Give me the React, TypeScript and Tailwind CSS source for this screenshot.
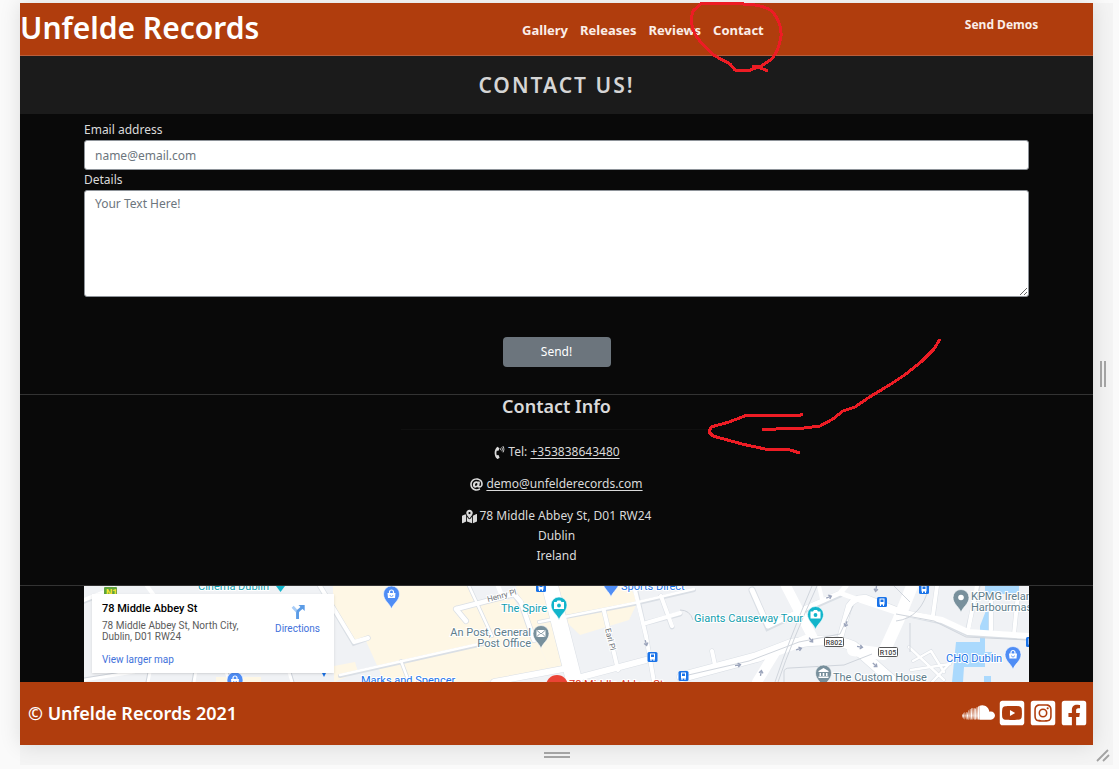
import React from "react";
import {
  FaAt,
  FaFacebookSquare,
  FaInstagramSquare,
  FaMapMarkedAlt,
  FaPhoneVolume,
  FaSoundcloud,
  FaYoutubeSquare,
} from "react-icons/fa";

const navLinks = ["Gallery", "Releases", "Reviews", "Contact"];

const socials = [
  { label: "SoundCloud", Icon: FaSoundcloud, size: "h-[33px] w-[33px]" },
  { label: "YouTube", Icon: FaYoutubeSquare, size: "h-7 w-7" },
  { label: "Instagram", Icon: FaInstagramSquare, size: "h-7 w-7" },
  { label: "Facebook", Icon: FaFacebookSquare, size: "h-7 w-7" },
];

type PinKind = "shop" | "camera" | "mail" | "museum" | "dot";

function Pin({ x, y, color, kind }: { x: number; y: number; color: string; kind: PinKind }) {
  return (
    <g transform={`translate(${x} ${y})`}>
      <path d="M0 15C-1.6 9.500-8 6.500-8 0a8 8 0 1 1 16 0C8 6.500 1.600 9.500 0 15z" fill={color} stroke="#fff" strokeWidth="0.6" />
      {kind === "shop" && (
        <>
          <path d="M-4-1h8l-.5 5h-7z" fill="#fff" />
          <path d="M-2 0v-2a2 2 0 0 1 4 0v2" fill="none" stroke="#fff" strokeWidth="1.200" />
          <path d="M-1.500 1a1.500 1.500 0 0 0 3 0" fill="none" stroke={color} strokeWidth="0.8" />
        </>
      )}
      {kind === "camera" && (
        <>
          <path d="M-5-3h2.500l1-1.500h3L2.500-3H5v7H-5z" fill="#fff" />
          <circle cx="0" cy="0.5" r="1.900" fill={color} />
        </>
      )}
      {kind === "mail" && (
        <>
          <path d="M-4.500-3.500h9v7h-9z" fill="#fff" />
          <path d="M-4.500-3.500L0 .5l4.500-4M-4.500 3.500l3-3M4.500 3.500l-3-3" fill="none" stroke={color} strokeWidth="0.9" />
        </>
      )}
      {kind === "museum" && (
        <path d="M-5-2L0-5l5 3v1H-5zM-4 0h1.500v3H-4zM-.8 0H.8v3H-.8zM2.500 0H4v3H2.500zM-5 3.500H5V5H-5z" fill="#fff" />
      )}
      {kind === "dot" && <circle r="2.800" fill="#fff" />}
    </g>
  );
}

function Stop({ x, y }: { x: number; y: number }) {
  return (
    <g transform={`translate(${x} ${y})`}>
      <rect x="-5" y="-5" width="10" height="10" rx="1.500" fill="#1a73e8" />
      <path d="M-2.500-3.500h5v6h-5zM-2 2.500h1V4h-1zM1 2.500h1V4H1z" fill="#fff" />
      <path d="M-1.500-2.500h3v2.500h-3z" fill="#1a73e8" />
    </g>
  );
}

function RoadArrow({ x, y, turn }: { x: number; y: number; turn: number }) {
  return (
    <path
      d="M-3 0H2M0-2L2.500 0L0 2"
      transform={`translate(${x} ${y}) rotate(${turn})`}
      fill="none"
      stroke="#9aa3ba"
      strokeWidth="1.300"
    />
  );
}

function StreetMap() {
  return (
    <svg
      viewBox="0 0 945 96"
      preserveAspectRatio="xMidYMid slice"
      className="block h-24 w-full"
      fontFamily="Roboto, sans-serif"
      fontSize="11"
      role="img"
      aria-label="Street map"
    >
      <rect width="945" height="96" fill="#f0f2f5" />
      <g fill="#fef7e5">
        <path d="M249 0H383L392 18L430 13L452 54L466 82L398 96H330L300 96L296 86L282 55L268 57L249 24z" />
        <path d="M432 0H462L479 82L466 82L445 40L434 8z" />
        <path d="M472 0H545L554 15L545 34L496 49L476 30z" />
        <path d="M250 80L271 76L274 86L250 96zM132 91h45v5h-45z" />
      </g>
      <g fill="#aad9fd">
        <path d="M901 0H935V8H901zM903 22H908V51H901V66H908V73H901V81H880L879 96H868L872 56H896L896 40zM900 90h7v6h-7z" />
      </g>
      <g fill="none" stroke="#dadfe5" strokeLinecap="round">
        <path d="M0 15L30 3M236 0L270 57L284 52" strokeWidth="5.500" />
        <path d="M256 90L399 58M455 36L550 18L610 4M317 75L325 96M385 0L408 50" strokeWidth="4" />
        <path d="M372 23L430 8L437 17L450 54M372 23L382 35" strokeWidth="6" />
        <path d="M466 0L491 98" strokeWidth="17" />
        <path d="M410 96L479 83M490 93L562 74" strokeWidth="7" />
        <path d="M552 5L562 50L570 96M562 37L596 28M577 10L588 41M520 25L534 84" strokeWidth="5" />
        <path d="M598 91L673 71L707 58Q746 50 769 60L810 96" strokeWidth="11" />
        <path d="M668 4L684 41L722 23L756 8M757 49L765 20Q770 11 782 12L820 27L858 35L884 47L945 51" strokeWidth="7" />
        <path d="M853 0L849 30M883 47L894 0M907 44V10M930 48L934 8M632 84L628 65" strokeWidth="5" />
        <path d="M825 61L860 94M827 84L866 78M829 75L847 65L860 86M848 96L869 74" strokeWidth="3.500" />
      </g>
      <g fill="none" stroke="#fff" strokeLinecap="round" strokeLinejoin="round">
        <path d="M0 14L30 2M236 0L270 56L284 52M63 0L74 15" strokeWidth="4" />
        <path d="M385 0L408 50M256 89L399 57M317 75L325 96M455 36L550 17L610 3" strokeWidth="2.500" />
        <path d="M372 23L430 8L437 16L450 54M372 23L382 35M414 0L418 10" strokeWidth="4.500" />
        <path d="M466 0L491 98" strokeWidth="16" />
        <path d="M410 96L479 83M490 93L562 74" strokeWidth="6" />
        <path d="M550 0L562 50L570 96M562 37L596 27M577 10L588 40M520 25L534 84" strokeWidth="4" />
        <path d="M598 91L673 71L707 58Q746 50 769 60L810 96M702 0L730 54M673 96L692 65L725 53" strokeWidth="10" />
        <path d="M668 4L684 40L722 22L756 7L762 0M756 7L775 14L820 29" strokeWidth="5" />
        <path d="M828 0L814 35L799 68L769 64" strokeWidth="12" />
        <path d="M757 49L765 20Q770 11 782 12L820 27L858 34L884 46L945 50" strokeWidth="6" />
        <path d="M853 0L849 29M884 45L893 0M907 44V10M930 48L934 8M632 84L628 65M735 0L738 13" strokeWidth="4" />
        <path d="M825 61L860 94M827 84L866 78M829 75L847 65L860 86M848 96L869 74" strokeWidth="2.500" />
        <path d="M112 84L110 96M66 86L64 96M142 86L146 96M205 86L208 96M0 94L50 86" strokeWidth="3" />
      </g>
      <g fill="none" stroke="#d0d5dc" strokeWidth="1">
        <path d="M600 90L665 75L715 56L756 48L769 20M691 96Q705 54 728 0M694 96Q708 55 733 0M812 28L850 35L882 51L945 54M810 0L826 16M700 96V86Q700 82 706 82L760 79L788 68M596 24Q606 24 609 34M826 37L826 66M845 0Q838 32 812 35" />
        <path d="M108 96L110 84M62 96L64 86M144 86L148 96M207 86L210 96M0 92L50 84" />
      </g>
      <RoadArrow x={745} y={11} turn={-22} />
      <RoadArrow x={792} y={3} turn={100} />
      <RoadArrow x={727} y={54} turn={50} />
      <RoadArrow x={715} y={63} turn={-15} />
      <RoadArrow x={762} y={38} turn={110} />
      <RoadArrow x={776} y={61} turn={10} />
      <RoadArrow x={791} y={79} turn={42} />
      <RoadArrow x={654} y={79} turn={-10} />
      <RoadArrow x={677} y={87} turn={-80} />
      <RoadArrow x={562} y={57} turn={75} />

      <rect x="20" y="1" width="13" height="10" rx="1" fill="#60a23d" />
      <text x="22" y="10" fontSize="9" fontWeight="700" fill="#f7e832">N1</text>

      <g stroke="#fff" strokeWidth="2" paintOrder="stroke">
        <text x="114" y="4" fill="#129eaf">Cinema Dublin</text>
        <text x="417" y="26" fill="#129eaf">The Spire</text>
        <text x="610" y="36" fill="#129eaf">Giants Causeway Tour</text>
        <text x="447" y="50" textAnchor="end" fill="#607d8b">An Post, General</text>
        <text x="447" y="61" textAnchor="end" fill="#607d8b">Post Office</text>
        <text x="537" y="4" fill="#1a73e8">Sports Direct</text>
        <text x="277" y="98" fill="#1a73e8">Marks and Spencer</text>
        <text x="485" y="102" fill="#d93025">78 Middle Abbey St</text>
        <text x="749" y="95" fill="#607d8b">The Custom House</text>
        <text x="862" y="76" fill="#1a73e8">CHQ Dublin</text>
        <text x="887" y="14" fill="#607d8b">KPMG Ireland</text>
        <text x="887" y="25" fill="#607d8b">Harbourmaster</text>
        <text fontSize="8" fill="#70757a" transform="translate(404 16) rotate(-15)">Henry Pl</text>
        <text fontSize="8" fill="#70757a" transform="translate(521 43) rotate(76)">Earl Pl</text>
      </g>

      <path d="M192 0h9l-4.500 6z" fill="#12b5cb" />
      <Pin x={307.5} y={8} color="#4f8df5" kind="shop" />
      <Pin x={475} y={19} color="#12b5cb" kind="camera" />
      <Pin x={457} y={47.5} color="#78909c" kind="mail" />
      <Pin x={527} y={-4} color="#4f8df5" kind="shop" />
      <Pin x={731.5} y={28.5} color="#12b5cb" kind="camera" />
      <Pin x={739.5} y={87} color="#78909c" kind="museum" />
      <Pin x={877} y={11.5} color="#78909c" kind="dot" />
      <Pin x={929} y={68.5} color="#4f8df5" kind="shop" />
      <Pin x={151} y={94} color="#4f8df5" kind="shop" />
      <circle cx="473" cy="100" r="11" fill="#ea4335" />
      <path d="M238 87h4l-2 4z" fill="#1a73e8" />

      <Stop x={457} y={1} />
      <Stop x={568.5} y={71} />
      <Stop x={599.5} y={90} />
      <Stop x={798} y={16} />
      <Stop x={840} y={3} />
      <Stop x={947} y={56} />

      <g fontSize="7" fontWeight="500" textAnchor="middle">
        <rect x="740.500" y="51.500" width="19" height="9" rx="1" fill="#fff" stroke="#555" />
        <text x="750" y="58.500" fill="#444">R802</text>
        <rect x="794.500" y="61.500" width="19" height="9" rx="1" fill="#fff" stroke="#555" />
        <text x="804" y="68.500" fill="#444">R105</text>
      </g>
    </svg>
  );
}

function MapCard() {
  return (
    <div className="absolute top-2 left-2 flex h-[79px] w-[242px] justify-between bg-white px-[10px] pt-2 font-[Roboto,sans-serif] shadow-sm">
      <div>
        <h3 className="text-[11px] leading-[14px] font-medium text-black">78 Middle Abbey St</h3>
        <p className="mt-1 w-36 text-[10px] leading-[11px] text-[#5b5b5b]">
          78 Middle Abbey St, North City, Dublin, D01 RW24
        </p>
        <a href="#map" className="mt-3 block text-[10px] leading-3 text-[#4272db]">
          View larger map
        </a>
      </div>
      <a href="#directions" className="mr-1 flex flex-col items-center text-[10px] leading-3 text-[#4272db]">
        <svg viewBox="0 0 16 18" className="mt-[2px] mb-[3px] h-4 w-4">
          <path d="M2 3L7.500 9V17" fill="none" stroke="#a9cdf7" strokeWidth="3.200" />
          <path d="M7.500 17V10Q7.500 8 9 7L13 3.500" fill="none" stroke="#5c9ce6" strokeWidth="3.200" />
          <path d="M8.500 1H15.500V8z" fill="#5c9ce6" />
        </svg>
        Directions
      </a>
    </div>
  );
}

function Header() {
  return (
    <header className="grid h-[53px] grid-cols-12 border-b border-[#b95e3c] bg-[#b03d0d] font-semibold text-white">
      <a href="#home" className="col-span-4 text-[30px] leading-[50px] whitespace-nowrap">
        Unfelde Records
      </a>
      <nav className="col-span-6 flex items-center justify-center gap-3 pt-1 pr-[6px] text-[13px] font-bold text-[#fbeee8]">
        {navLinks.map((name) => (
          <a key={name} href={`#${name.toLowerCase()}`}>
            {name}
          </a>
        ))}
      </nav>
      <a href="#demos" className="col-span-2 pt-3 pr-1 text-center text-[12px] leading-5 font-bold text-[#fbeee8]">
        Send Demos
      </a>
    </header>
  );
}

function ContactForm() {
  return (
    <form className="flex flex-col px-16 pt-[6px] pb-[27px]" onSubmit={(e) => e.preventDefault()}>
      <label htmlFor="email" className="leading-5">
        Email address
      </label>
      <input
        id="email"
        type="email"
        placeholder="name@email.com"
        className="h-[30px] rounded-[3px] border border-[#8e9399] bg-white px-[10px] text-black placeholder:text-[#6c757d]"
      />
      <label htmlFor="details" className="leading-5">
        Details
      </label>
      <textarea
        id="details"
        placeholder="Your Text Here!"
        className="h-[107px] resize-y rounded-[3px] border border-[#8e9399] bg-white px-[10px] py-[3px] leading-5 text-black placeholder:text-[#6c757d]"
      />
      <button type="submit" className="mt-10 h-[30px] w-[108px] self-center rounded-[4px] bg-[#6c757d] text-white">
        Send!
      </button>
    </form>
  );
}

function ContactInfo() {
  return (
    <section className="flex flex-col items-center gap-3 border-y border-[#333] pb-[19px] text-center leading-5">
      <h2 className="w-[312px] border-b border-[#101010] pb-[11px] text-[18px] leading-[23px] font-semibold">
        Contact Info
      </h2>
      <p className="flex items-center gap-[2px]">
        <FaPhoneVolume className="h-[13px] w-[13px]" />
        <span>
          Tel:{" "}
          <a href="tel:+353838643480" className="underline underline-offset-2">
            +353838643480
          </a>
        </span>
      </p>
      <p className="flex items-center gap-[3px]">
        <FaAt className="h-[13px] w-[13px]" />
        <a href="mailto:demo@unfelderecords.com" className="underline underline-offset-2">
          demo@unfelderecords.com
        </a>
      </p>
      <address className="not-italic">
        <span className="flex items-center gap-[3px]">
          <FaMapMarkedAlt className="h-[15px] w-[15px]" />
          78 Middle Abbey St, D01 RW24
        </span>
        Dublin
        <br />
        Ireland
      </address>
    </section>
  );
}

function Footer() {
  return (
    <footer className="flex h-[63px] items-center justify-between bg-[#b03d0d] pr-[5px] pl-2 text-white">
      <p className="text-[18px] font-semibold">© Unfelde Records 2021</p>
      <div className="flex items-center gap-[3px] pb-[2px]">
        {socials.map(({ label, Icon, size }) => (
          <a key={label} href={`#${label.toLowerCase()}`} aria-label={label}>
            <Icon className={size} />
          </a>
        ))}
      </div>
    </footer>
  );
}

function PenMarks() {
  return (
    <svg
      viewBox="0 0 1119 769"
      preserveAspectRatio="xMidYMin meet"
      className="pointer-events-none absolute inset-0 h-full w-full"
      fill="none"
      stroke="#ed1c24"
      strokeWidth="3"
      strokeLinejoin="round"
      shapeRendering="crispEdges"
      aria-hidden="true"
    >
      <path d="M744 3.500H701L693 11Q689 24 696 36Q703 46 715 56L730 64L735 70L748 71L758 67L768 71M743 4Q761 4 772 11Q782 23 781 36Q779 50 772 59L761 66L752 67" />
      <path d="M940 339L934 349L922 361L906 374L891 384L868 398L855 407L843 411L833 419L820 426L804 428L762 429.500" />
      <path d="M803 414.500L798 415.500H746L729 422L711 427L709 432L713 436L742 444L765 449L790 450L800 453" />
    </svg>
  );
}

export default function App() {
  return (
    <div className="relative min-h-screen bg-[#fafafa] pt-[3px] pr-[6px] pb-1 pl-5 font-['Noto_Sans','Open_Sans',sans-serif] text-[12px]">
      <div className="grid grid-cols-[minmax(0,1fr)_20px] grid-rows-[auto_20px] bg-[#f4f4f4]">
        <div className="bg-[#090909] text-[#dadada] shadow-[0_0_20px_rgba(0,0,0,0.12)]">
          <Header />
          <h1 className="bg-[#1b1b1b] text-center text-[21px] leading-[58px] font-semibold tracking-[2px] text-[#d5d5d5] uppercase">
            Contact us!
          </h1>
          <main>
            <ContactForm />
            <ContactInfo />
            <section className="relative mx-16">
              <StreetMap />
              <MapCard />
            </section>
          </main>
          <Footer />
        </div>
        <div className="flex items-center justify-center gap-[2px]">
          <span className="h-[26px] w-[2px] bg-[#a3a3a3]" />
          <span className="h-[26px] w-[2px] bg-[#a3a3a3]" />
        </div>
        <div className="flex flex-col items-center justify-center gap-[2px]">
          <span className="h-[2px] w-[26px] bg-[#a3a3a3]" />
          <span className="h-[2px] w-[26px] bg-[#a3a3a3]" />
        </div>
        <svg viewBox="0 0 20 20" className="h-5 w-5" fill="none" stroke="#a3a3a3" strokeWidth="1.800">
          <path d="M4 16L15 5M10 16L16 10" />
        </svg>
      </div>
      <PenMarks />
    </div>
  );
}
